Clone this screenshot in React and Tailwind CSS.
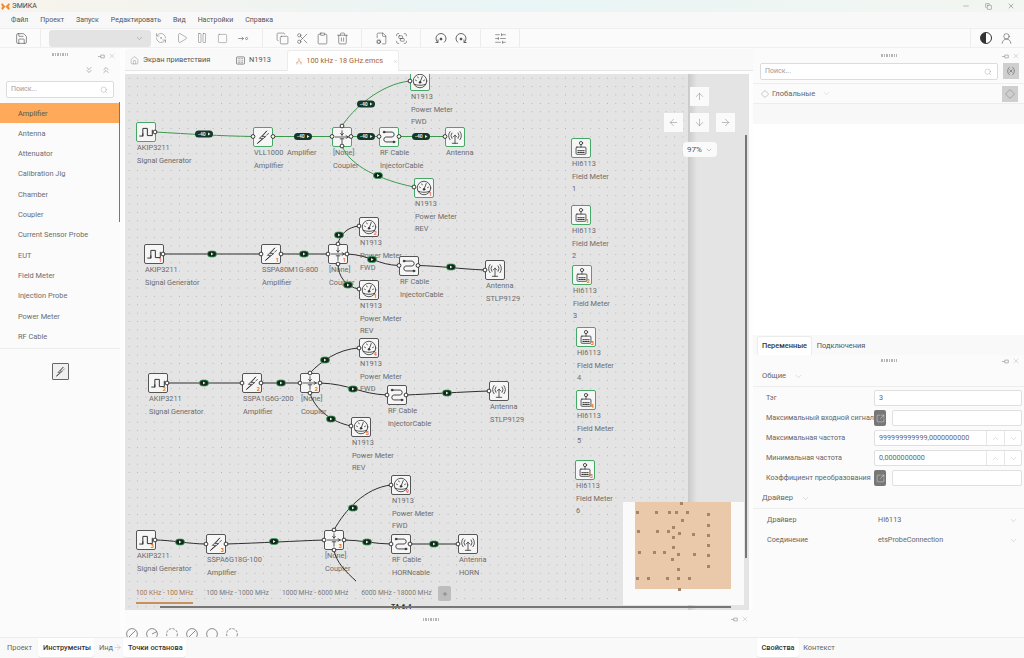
import {
  ArrowRight,
  ArrowDown,
  ArrowLeft,
  ArrowUp,
  ChevronDown,
  ChevronUp,
  ChevronsDown,
  ChevronsUp,
  Clipboard,
  Copy,
  Diamond,
  FileCog,
  Group,
  Home,
  Minus,
  Network,
  Pause,
  Play,
  Plus,
  RefreshCcwDot,
  Save,
  Scissors,
  Search,
  SlidersHorizontal,
  Square,
  SquareArrowOutUpRight,
  Trash2,
  UserRound,
  Variable,
  X,
} from "lucide-react";

// canvas origin on the page, nodes and wires below are in page coordinates
const OX = 125;
const OY = 74;

const NODES = [
  // row 1
  { t: "gen", x: 136, y: 122, on: 1, l: ["AKIP3211", "Signal Generator"] },
  { t: "amp", x: 253, y: 127, on: 1, l: ["VLL1000  Amplifier", "Amplifier"] },
  { t: "cpl", x: 332, y: 127, on: 1, l: ["[None]", "Coupler"] },
  { t: "cab", x: 379, y: 127, on: 1, l: ["RF Cable", "InjectorCable"] },
  { t: "ant", x: 445, y: 127, on: 1, l: ["Antenna"] },
  { t: "mtr", x: 410, y: 71, on: 1, l: ["N1913", "Power Meter", "FWD"] },
  { t: "mtr", x: 414, y: 178, on: 1, b: "1", l: ["N1913", "Power Meter", "REV"] },
  // row 2
  { t: "gen", x: 144, y: 244, b: "1", l: ["AKIP3211", "Signal Generator"] },
  { t: "amp", x: 261, y: 244, b: "1", l: ["SSPA80M1G-800", "Amplifier"] },
  { t: "cpl", x: 328, y: 244, b: "1", l: ["[None]", "Coupler"] },
  { t: "mtr", x: 359, y: 217, b: "2", l: ["N1913", "Power Meter", "FWD"] },
  { t: "mtr", x: 359, y: 280, b: "1", l: ["N1913", "Power Meter", "REV"] },
  { t: "cab", x: 399, y: 256, l: ["RF Cable", "InjectorCable"] },
  { t: "ant", x: 485, y: 260, l: ["Antenna", "STLP9129"] },
  // row 3
  { t: "gen", x: 148, y: 373, b: "2", l: ["AKIP3211", "Signal Generator"] },
  { t: "amp", x: 242, y: 373, b: "2", l: ["SSPA1G6G-200", "Amplifier"] },
  { t: "cpl", x: 300, y: 373, b: "2", l: ["[None]", "Coupler"] },
  { t: "mtr", x: 359, y: 338, b: "4", l: ["N1913", "Power Meter", "FWD"] },
  { t: "mtr", x: 351, y: 417, b: "5", l: ["N1913", "Power Meter", "REV"] },
  { t: "cab", x: 387, y: 385, l: ["RF Cable", "injectorCable"] },
  { t: "ant", x: 489, y: 381, l: ["Antenna", "STLP9129"] },
  // row 4
  { t: "gen", x: 136, y: 530, b: "3", l: ["AKIP3211", "Signal Generator"] },
  { t: "amp", x: 206, y: 534, b: "3", l: ["SSPA6G18G-100", "Amplifier"] },
  { t: "cpl", x: 324, y: 530, b: "3", l: ["[None]", "Coupler"] },
  { t: "mtr", x: 391, y: 475, b: "9", l: ["N1913", "Power Meter", "FWD"] },
  { t: "cab", x: 391, y: 534, l: ["RF Cable", "HORNcable"] },
  { t: "ant", x: 458, y: 534, l: ["Antenna", "HORN"] },
  // field meters
  { t: "fld", x: 571, y: 138, on: 1, l: ["HI6113", "Field Meter", "1"] },
  { t: "fld", x: 571, y: 205, on: 1, b: "1", l: ["HI6113", "Field Meter", "2"] },
  { t: "fld", x: 572, y: 265, on: 1, b: "2", l: ["HI6113", "Field Meter", "3"] },
  { t: "fld", x: 576, y: 327, on: 1, b: "3", l: ["HI6113", "Field Meter", "4"] },
  { t: "fld", x: 576, y: 390, on: 1, b: "4", l: ["HI6113", "Field Meter", "5"] },
  { t: "fld", x: 575, y: 460, on: 1, b: "5", l: ["HI6113", "Field Meter", "6"] },
];

// d = wire path, p = pill position, g = green wire with -40 label
const WIRES = [
  { d: "M155 132 C190 134 220 136 253 136.5", p: [204, 134], g: 1 },
  { d: "M273 136.5 H332", p: [303, 136.5], g: 1 },
  { d: "M351 136.5 H379", p: [366, 136.5], g: 1 },
  { d: "M399 136.5 H445", p: [421, 136.5], g: 1 },
  { d: "M342 126 C352 110 380 84 410 81", p: [366, 104], g: 1 },
  { d: "M342 146 C350 166 380 180 414 187", p: [378, 175.5], g: 1, s: 1 },

  { d: "M163 254 H261", p: [212, 254] },
  { d: "M281 254 H328", p: [304, 254] },
  { d: "M338 244 C340 234 348 227 359 226", p: [339, 235] },
  { d: "M338 264 C338 276 346 287 359 289", p: [348, 285] },
  { d: "M347 254 C370 255 378 265 399 265.5", p: [372, 259.5] },
  { d: "M418 265.5 C440 266 460 269 485 270", p: [451, 267] },

  { d: "M167 383 H242", p: [204, 383] },
  { d: "M261 383 H300", p: [281, 383] },
  { d: "M310 373 C320 362 338 349 359 348", p: [325, 360] },
  { d: "M310 393 C315 410 332 422 351 426", p: [331, 419] },
  { d: "M320 383 C350 384 360 394 387 395", p: [353, 389] },
  { d: "M406 395 C430 394 460 392 489 391", p: [447, 393] },

  { d: "M155 540 C170 540 190 544 206 544", p: [180, 542] },
  { d: "M226 544 C260 543 295 541 324 540", p: [274, 541.5] },
  { d: "M334 530 C345 510 365 488 391 485", p: [353, 508] },
  { d: "M344 540 C360 540 375 544 391 544", p: [367, 542] },
  { d: "M410 544 H458", p: [434, 544] },
  { d: "M334 550 C336 562 346 572 356 581" },
];

const PORTS = [
  [155, 132], [253, 136.5], [273, 136.5], [332, 136.5], [351, 136.5], [342, 126], [342, 146],
  [379, 136.5], [399, 136.5], [445, 136.5], [410, 81], [414, 187],
  [163, 254], [261, 254], [281, 254], [328, 254], [347, 254], [338, 244], [338, 264],
  [359, 226], [359, 289], [399, 265.5], [418, 265.5], [485, 270],
  [167, 383], [242, 383], [261, 383], [300, 383], [320, 383], [310, 373], [310, 393],
  [359, 348], [351, 426], [387, 395], [406, 395], [489, 391],
  [155, 540], [206, 544], [226, 544], [324, 540], [344, 540], [334, 530], [334, 550],
  [391, 485], [391, 544], [410, 544], [458, 544],
];

const MINI_DOTS = [
  [365, 160], [232, 185], [289, 187], [327, 187], [350, 187], [382, 186], [444, 192], [367, 211],
  [444, 225], [340, 230], [235, 244], [293, 244], [325, 244], [359, 249], [401, 252], [444, 254],
  [340, 261], [446, 284], [340, 290], [237, 307], [283, 307], [312, 307], [354, 313], [403, 311],
  [446, 315], [337, 328], [446, 349], [355, 357], [232, 384], [266, 385], [323, 384], [355, 385],
  [388, 385], [358, 416],
];

const TOOLS = [
  "Amplifier",
  "Antenna",
  "Attenuator",
  "Calibration Jig",
  "Chamber",
  "Coupler",
  "Current Sensor Probe",
  "EUT",
  "Field Meter",
  "Injection Probe",
  "Power Meter",
  "RF Cable",
];

const MENU = ["Файл", "Проект", "Запуск", "Редактировать", "Вид", "Настройки", "Справка"];

function NodeIcon({ type }) {
  const common = { fill: "none", stroke: "#333", strokeWidth: 0.9, strokeLinecap: "round", strokeLinejoin: "round" };
  return (
    <svg viewBox="0 0 20 20" className="w-full h-full" {...common}>
      {type === "gen" && <path d="M3 14.5h3.5V12 M6.5 14.5V6h5v8h5.5V8" strokeWidth="1.1" />}
      {type === "amp" && <path d="M14 3.5 6 11.5h3.5L4 17l9-7.5H9.5z M16 6l-2 2 M6 15l-2 2" />}
      {type === "cpl" && (
        <>
          <path d="M2.5 10h15 M14.5 8.5 17 10l-2.5 1.5" />
          <path d="M10 3v5 M8.5 6 10 8l1.500-2 M10 12v5 M8 12h4" />
        </>
      )}
      {type === "cab" && (
        <>
          <path d="M5.500 4.500h8a2.800 2.800 0 0 1 0 5.500h-7a2.800 2.800 0 0 0 0 5.500h8" strokeWidth="1" />
          <circle cx="4.500" cy="4.500" r="1" fill="#333" />
          <circle cx="15.500" cy="15.500" r="1" fill="#333" />
        </>
      )}
      {type === "ant" && (
        <>
          <path d="M10 8v9 M7 17h6 M8 10l2-2 2 2" />
          <path d="M6.500 5.500a5 5 0 0 0 0 6 M4.500 4a7.500 7.500 0 0 0 0 9 M13.500 5.500a5 5 0 0 1 0 6 M15.500 4a7.500 7.500 0 0 1 0 9" />
        </>
      )}
      {type === "mtr" && (
        <>
          <circle cx="10" cy="10" r="7.500" />
          <path d="M3.500 13.500c4 1.800 9 1.800 13 0 M10 11.500 12.500 5 M5 9l1 .5 M7.500 5.500l.5 1 M15 9l-1 .5" />
          <circle cx="10" cy="11.500" r="1" fill="#333" />
        </>
      )}
      {type === "fld" && (
        <>
          <circle cx="10" cy="4.500" r="1.800" />
          <path d="M10 6.300V9" />
          <rect x="4.500" y="9" width="11" height="8" rx="1" />
          <path d="M6.500 13h7 M6.500 15h7" strokeDasharray="1 1" strokeWidth="1.100" />
        </>
      )}
    </svg>
  );
}

function DiagramNode({ node }) {
  return (
    <>
      <div
        className={`absolute w-5 h-5 bg-[#f6f6f6] rounded-[2px] border-[1.2px] ${node.on ? "border-[#45a866]" : "border-[#555]"}`}
        style={{ left: node.x - OX, top: node.y - OY }}
      >
        <NodeIcon type={node.t} />
        {node.b && (
          <span className="absolute right-[1px] bottom-0 text-[5.5px] leading-[6px] font-bold text-[#f0672a]">{node.b}</span>
        )}
      </div>
      <div
        className="absolute whitespace-pre text-[7.4px] leading-[12.6px] text-[#6c6c6c]"
        style={{ left: node.x - OX + 1, top: node.y - OY + 20 }}
      >
        {node.l.map((line) => (
          <div key={line}>{line}</div>
        ))}
      </div>
    </>
  );
}

function Wires() {
  return (
    <svg viewBox={`${OX} ${OY} 624 536`} className="absolute left-0 top-0 w-[624px] h-[536px]">
      {WIRES.map((w) => (
        <path key={w.d} d={w.d} fill="none" stroke={w.g ? "#3c9a4c" : "#2e2e2e"} strokeWidth="1" />
      ))}
      {WIRES.filter((w) => w.p).map((w) =>
        w.g && !w.s ? (
          <g key={w.d}>
            <rect x={w.p[0] - 9} y={w.p[1] - 3.5} width="18" height="7" rx="3.5" fill="#12392a" />
            <text x={w.p[0] - 6} y={w.p[1] + 1.800} fontSize="5" fontWeight="700" fill="#e8e8e8">
              -40
            </text>
            <path d={`M${w.p[0] + 4} ${w.p[1] - 1.500}l2.500 1.500-2.500 1.500z`} fill="#e8e8e8" />
          </g>
        ) : (
          <g key={w.d}>
            <rect x={w.p[0] - 4.5} y={w.p[1] - 3} width="9" height="6" rx="3" fill="#14251c" stroke="#37a35a" strokeWidth="0.8" />
            <path d={`M${w.p[0] - 1} ${w.p[1] - 1.500}l2.500 1.500-2.500 1.500z`} fill="#e8e8e8" />
          </g>
        ),
      )}
      {PORTS.map(([x, y]) => (
        <circle key={`${x}-${y}`} cx={x} cy={y} r="1.900" fill="#fff" stroke="#222" strokeWidth="0.9" />
      ))}
    </svg>
  );
}

function NavButton({ children }) {
  return <div className="w-[19px] h-[19px] bg-[#fafafa] flex items-center justify-center text-[#777]">{children}</div>;
}

function ToolBtn({ children }) {
  return <div className="w-5 h-5 shrink-0 flex items-center justify-center text-[#6e6e6e]">{children}</div>;
}

function Sep() {
  return <div className="w-px h-[18px] mx-[9px] shrink-0 bg-[#ececec]" />;
}

function Grip() {
  return <div className="w-[16px] h-[3px] bg-[repeating-linear-gradient(90deg,#b5b5b5_0_1.500px,transparent_1.500px_2.500px)]" />;
}

// little pin + close pair on the dock panels
function PinClose() {
  return (
    <div className="flex items-center gap-[3px] text-[#9a9a9a]">
      <svg viewBox="0 0 10 10" className="w-[7px] h-[7px]" fill="none" stroke="currentColor" strokeWidth="1">
        <path d="M0 5h4 M4 3h5v4H4z" />
      </svg>
      <X size={8} strokeWidth={1} />
    </div>
  );
}

function SearchBox({ className }) {
  return (
    <div className={`h-[17px] bg-white border border-[#dcdcdc] rounded-[2px] flex items-center justify-between pl-1 pr-[5px] ${className}`}>
      <span className="text-[7px] text-[#9a9a9a]">Поиск...</span>
      <Search size={8} strokeWidth={1} className="text-[#8a8a8a]" />
    </div>
  );
}

function LeftPanel() {
  return (
    <div className="relative w-[120px] shrink-0 flex flex-col bg-[#fbfbfb]">
      <div className="h-[11px] mt-[1px] relative flex items-center justify-center">
        <Grip />
        <div className="absolute right-[4px] top-[3px]">
          <PinClose />
        </div>
      </div>
      <div className="h-[15px] flex items-center justify-end gap-[7px] pr-[9px] pt-1 text-[#444]">
        <ChevronsDown size={10} strokeWidth={1} />
        <ChevronsUp size={10} strokeWidth={1} />
      </div>
      <SearchBox className="mx-[6px] mt-[6px] w-[108px]" />
      <div className="mt-[5px] flex flex-col border-b border-[#ededed] pb-[1px]">
        {TOOLS.map((tool, i) => (
          <div
            key={tool}
            className={`h-[20.300px] pl-[18px] flex items-center text-[7.4px] ${i === 0 ? "bg-[#ffa95a] text-[#555]" : "text-[#6c6c6c]"}`}
          >
            {tool}
          </div>
        ))}
      </div>
      <div className="mt-[14px] ml-[52px] w-[17px] h-[17px] border border-[#666] bg-[#f0f0f0] rounded-[1px] p-[1px]">
        <NodeIcon type="amp" />
      </div>
      <div className="absolute right-0 top-[54px] w-[1.500px] h-[120px] bg-[#777]" />
    </div>
  );
}

function EditorTabs() {
  return (
    <div className="h-[22px] mt-[1px] shrink-0 flex items-end bg-[#f9f9f9] border-b border-[#e6e6e6] text-[7.4px] text-[#555]">
      <div className="flex items-center h-[20px] w-[106px] pl-[5px] gap-[4px]">
        <Home size={9} strokeWidth={1} className="text-[#777]" />
        <span>Экран приветствия</span>
      </div>
      <div className="flex items-center h-[20px] w-[56px] pl-[5px] gap-[4px]">
        <svg viewBox="0 0 10 10" className="w-[9px] h-[9px]" fill="none" stroke="#666" strokeWidth="0.8">
          <rect x="0.5" y="1" width="9" height="8" rx="1" />
          <path d="M2 3h6 M2 5.500h6 M2 7.500h6" strokeDasharray="1 0.6" />
        </svg>
        <span>N1913</span>
      </div>
      <div className="flex items-center h-[21px] w-[112px] -mb-px pl-[8px] gap-[4px] bg-white rounded-t-[3px] border border-b-0 border-[#ececec] text-[#a9642c] whitespace-nowrap">
        <Network size={9} strokeWidth={1} className="text-[#c9783a]" />
        <span>100 kHz - 18 GHz.emcs</span>
        <X size={7} strokeWidth={1} className="ml-[6px] text-[#888]" />
      </div>
    </div>
  );
}

function Canvas() {
  return (
    <div className="relative w-[624px] h-[536px] mt-[3px] shrink-0 overflow-hidden bg-[#e4e4e4]">
      {/* dotted drawing area */}
      <div className="absolute left-0 top-0 w-[563px] h-full overflow-hidden bg-[#e4e4e4] bg-[radial-gradient(circle,#b0b0b0_0.5px,transparent_0.8px)] bg-[size:8.400px_8.400px]">
        {NODES.map((n) => (
          <DiagramNode key={`${n.x}-${n.y}`} node={n} />
        ))}
        <Wires />
        <div className="absolute left-[266px] top-[530px] text-[7px] font-bold leading-none text-[#333]">TA 6.4</div>
      </div>
      <div className="absolute left-[563px] top-0 w-[9px] h-full bg-gradient-to-r from-[#c9c9c9] to-[#e4e4e4]" />

      {/* scroll bars */}
      <div className="absolute left-[620px] top-[61px] w-[1.500px] h-[423px] bg-[#777]" />
      <div className="absolute left-[35px] top-[532px] w-[571px] h-[1.500px] bg-[#777]" />

      {/* arrows */}
      <div className="absolute left-[539px] top-[13px] grid grid-cols-[19px_19px_19px] gap-x-[7px] gap-y-[7px]">
        <div />
        <NavButton>
          <ArrowUp size={11} strokeWidth={1} />
        </NavButton>
        <div />
        <NavButton>
          <ArrowLeft size={11} strokeWidth={1} />
        </NavButton>
        <NavButton>
          <ArrowDown size={11} strokeWidth={1} />
        </NavButton>
        <NavButton>
          <ArrowRight size={11} strokeWidth={1} />
        </NavButton>
      </div>
      <div className="absolute left-[558px] top-[68px] w-[34px] h-[15px] rounded-[4px] bg-[#fafafa] flex items-center justify-center gap-[3px] text-[8px] text-[#555]">
        97%
        <ChevronDown size={8} strokeWidth={1} />
      </div>

      {/* band tabs */}
      <div className="absolute left-[11px] top-[512px] flex items-center gap-[13px] text-[6.7px] text-[#7a7a7a]">
        <div className="relative text-[#a9784f]">
          100 KHz - 100 MHz
          <div className="absolute left-0 right-0 top-[14px] h-[1.500px] bg-[#c98f5c]" />
        </div>
        <span>100 MHz - 1000 MHz</span>
        <span>1000 MHz - 6000 MHz</span>
        <span>6000 MHz - 18000 MHz</span>
        <div className="-ml-[6px] w-[13px] h-[15px] bg-[#bdbdbd] rounded-[2px] flex items-center justify-center text-[#444]">
          <Plus size={6} strokeWidth={1.500} />
        </div>
      </div>

      {/* minimap */}
      <div className="absolute left-[498px] top-[428px] w-[121px] h-[103px] bg-[#fafafa]">
        <div className="absolute left-[12px] top-0 w-[96px] h-[87px] bg-[#e9c9aa]" />
        {MINI_DOTS.map(([x, y]) => (
          <div
            key={`${x}-${y}`}
            className="absolute w-[3px] h-[3px] bg-[#a5846a]"
            style={{ left: (x - 189) / 3 - 1.5, top: (y - 155) / 3 - 1.5 }}
          />
        ))}
      </div>
    </div>
  );
}

function CenterBottom() {
  return (
    <div className="relative flex-1 overflow-hidden bg-[#fbfbfb]">
      <div className="absolute left-[298px] top-[8px]">
        <Grip />
      </div>
      <div className="absolute right-[4px] top-[5px]">
        <PinClose />
      </div>
      <div className="absolute left-[1px] top-[18px] flex gap-2">
        {[0, 1, 2, 3, 4, 5].map((i) => (
          <svg key={i} viewBox="0 0 10 10" className="w-3 h-3" fill="none" stroke="#777" strokeWidth="0.7">
            <circle cx="5" cy="5" r="4.500" strokeDasharray={i === 2 || i === 5 ? "2 1" : undefined} />
            {(i === 0 || i === 3) && <path d="M2 8 8 2" />}
            {i === 1 && <path d="M5 5 9 3" />}
          </svg>
        ))}
      </div>
    </div>
  );
}

function BottomTabs() {
  return (
    <div className="h-[21px] shrink-0 flex items-start bg-[#f9f9f9] border-t border-[#ececec] text-[7.4px] text-[#666]">
      <div className="w-[38px] h-[20px] pl-[7px] flex items-center">Проект</div>
      <div className="w-[56px] h-[19px] pl-[5px] flex items-center bg-white rounded-b-[3px] shadow-[0_1px_1px_#e5e5e5] font-medium text-[#333]">
        Инструменты
      </div>
      <div className="w-[29px] h-[20px] pl-[5px] flex items-center">
        <span>Инд</span>
        <ArrowRight size={9} strokeWidth={0.8} className="shrink-0 -mt-[2px] text-[#888]" />
      </div>
      <div className="w-[63px] h-[19px] pl-[5px] flex items-center bg-white rounded-b-[3px] shadow-[0_1px_1px_#e5e5e5] font-medium text-[#333]">
        Точки останова
      </div>
    </div>
  );
}

function PropRow({ label, children }) {
  return (
    <div className="h-5 flex items-center pl-[13px] pr-[2px] text-[7.2px] text-[#666]">
      <span className="w-[108px] shrink-0 whitespace-nowrap">{label}</span>
      {children}
    </div>
  );
}

function TextInput({ value, className = "", spin }) {
  return (
    <div className={`h-4 flex items-center bg-white border border-[#e0e0e0] rounded-[2px] text-[7.2px] text-[#666] ${className}`}>
      <span className="flex-1 pl-1">{value}</span>
      {spin && (
        <>
          <div className="w-[18px] h-full border-l border-[#e6e6e6] flex items-center justify-center text-[#aaa]">
            <ChevronUp size={9} strokeWidth={1} />
          </div>
          <div className="w-[17px] h-full border-l border-[#e6e6e6] flex items-center justify-center text-[#aaa]">
            <ChevronDown size={9} strokeWidth={1} />
          </div>
        </>
      )}
    </div>
  );
}

function LinkInput() {
  return (
    <div className="flex-1 flex items-center gap-[6px]">
      <div className="w-3 h-4 rounded-[2px] bg-[#777] flex items-center justify-center text-white">
        <SquareArrowOutUpRight size={9} strokeWidth={1} />
      </div>
      <TextInput value="" className="flex-1" />
    </div>
  );
}

function SectionHead({ children }) {
  return (
    <div className="h-[21px] pl-[9px] flex items-center gap-[8px] border-b border-[#ededed] text-[7.6px] text-[#666]">
      {children}
      <ChevronDown size={9} strokeWidth={1} className="text-[#aaa]" />
    </div>
  );
}

function SelectRow({ label, value }) {
  return (
    <div className="h-5 flex items-center pl-[14px] pr-[6px] text-[7.2px] text-[#666]">
      <span className="w-[111px] shrink-0">{label}</span>
      <span className="flex-1">{value}</span>
      <ChevronDown size={9} strokeWidth={1} className="text-[#aaa]" />
    </div>
  );
}

function RightPanel() {
  return (
    <div className="w-[271px] shrink-0 flex flex-col bg-white">
      {/* globals */}
      <div className="h-[287px] shrink-0 flex flex-col">
        <div className="h-[15px] relative flex items-center justify-center bg-[#fbfbfb]">
          <Grip />
          <div className="absolute right-[4px] top-[4px]">
            <PinClose />
          </div>
        </div>
        <div className="h-[21px] flex items-start gap-[5px] pl-[7px] bg-[#fbfbfb] border-b border-[#ededed]">
          <SearchBox className="w-[238px]" />
          <div className="w-4 h-4 bg-[#cfcfcf] flex items-center justify-center text-[#444]">
            <Variable size={10} strokeWidth={1.200} />
          </div>
        </div>
        <div className="h-[20px] flex items-center pl-[8px] pr-[6px] bg-[#fbfbfb] border-b border-[#ededed] text-[7.6px] text-[#666]">
          <Diamond size={8} strokeWidth={1} className="mr-[3px]" />
          Глобальные
          <ChevronDown size={9} strokeWidth={1} className="ml-[7px] text-[#bbb]" />
          <div className="ml-auto w-4 h-4 bg-[#cfcfcf] flex items-center justify-center text-[#666]">
            <Diamond size={10} strokeWidth={1} />
          </div>
        </div>
        <div className="h-[20px] bg-[#f8f8f8]" />
      </div>

      {/* properties */}
      <div className="h-5 shrink-0 flex items-end pl-[4px] bg-[#f9f9f9] text-[7.4px]">
        <div className="w-[55px] h-[19px] flex items-center justify-center bg-white rounded-t-[3px] border border-b-0 border-[#ececec] font-medium text-[#333]">
          Переменные
        </div>
        <div className="w-[58px] h-[19px] flex items-center justify-center text-[#555]">Подключения</div>
      </div>
      <div className="flex-1 flex flex-col bg-[#fbfbfb]">
        <div className="h-[11px] relative flex items-center justify-center">
          <Grip />
          <div className="absolute right-[4px] top-[2px]">
            <PinClose />
          </div>
        </div>
        <SectionHead>Общие</SectionHead>
        <div className="pt-[1px]">
          <PropRow label="Тэг">
            <TextInput value="3" className="flex-1" />
          </PropRow>
          <PropRow label="Максимальный входной сигнал">
            <LinkInput />
          </PropRow>
          <PropRow label="Максимальная частота">
            <TextInput value="999999999999,0000000000" className="flex-1" spin />
          </PropRow>
          <PropRow label="Минимальная частота">
            <TextInput value="0,0000000000" className="flex-1" spin />
          </PropRow>
          <PropRow label="Коэффициент преобразования">
            <LinkInput />
          </PropRow>
        </div>
        <SectionHead>Драйвер</SectionHead>
        <div className="pt-[1px]">
          <SelectRow label="Драйвер" value="HI6113" />
          <SelectRow label="Соединение" value="etsProbeConnection" />
        </div>
      </div>
      <div className="h-[21px] shrink-0 flex items-start pl-[4px] bg-[#f9f9f9] border-t border-[#ececec] text-[7.4px] text-[#666]">
        <div className="w-[42px] h-[19px] flex items-center justify-center bg-white rounded-b-[3px] shadow-[0_1px_1px_#e5e5e5] font-medium text-[#333]">
          Свойства
        </div>
        <div className="w-[40px] h-[20px] flex items-center justify-center">Контекст</div>
      </div>
    </div>
  );
}

export default function App() {
  return (
    <div className="w-[1024px] h-[658px] overflow-hidden flex flex-col bg-white font-['Roboto','Noto_Sans',sans-serif]">
      {/* title bar */}
      <div className="h-3 shrink-0 flex items-center pl-[1px] bg-gradient-to-r from-[#f8f3ec] via-[#e9f5f6] to-[#f3f6f1] text-[7px] text-[#444]">
        <svg viewBox="0 0 10 8" className="w-[9px] h-[7px] mr-[2px]" fill="#f08c2e">
          <path d="M5 4 1 0 0 2l1.500 2L0 6l1.500 2zM5 4l4-4 1 2-1.500 2L10 6 8.500 8z" />
        </svg>
        ЭМИКА
        <div className="ml-auto flex items-center gap-[15px] pr-[9px] text-[#444]">
          <Minus size={8} strokeWidth={1} />
          <Copy size={7} strokeWidth={1.200} />
          <X size={8} strokeWidth={1.200} />
        </div>
      </div>

      {/* menu */}
      <div className="h-4 shrink-0 flex items-center pl-[11px] gap-3 bg-[#f8f8f8] text-[7px] text-[#555]">
        {MENU.map((m) => (
          <span key={m}>{m}</span>
        ))}
      </div>

      {/* toolbar */}
      <div className="h-5 shrink-0 flex items-center pl-[11px] pr-[8px] bg-[#fbfbfb] border-y border-[#efefef]">
        <ToolBtn>
          <Save size={13} strokeWidth={1} className="text-[#333]" />
        </ToolBtn>
        <Sep />
        <div className="w-[102px] h-[17px] shrink-0 -ml-px rounded-[3px] bg-[#e3e3e3] flex items-center justify-end pr-[7px] text-[#666]">
          <ChevronDown size={9} strokeWidth={1} />
        </div>
        <ToolBtn>
          <RefreshCcwDot size={12} strokeWidth={1} />
        </ToolBtn>
        <div className="w-px shrink-0" />
        <ToolBtn>
          <Play size={12} strokeWidth={1} />
        </ToolBtn>
        <ToolBtn>
          <Pause size={12} strokeWidth={1} />
        </ToolBtn>
        <ToolBtn>
          <Square size={11} strokeWidth={1} />
        </ToolBtn>
        <div className="w-px shrink-0" />
        <ToolBtn>
          <svg viewBox="0 0 12 8" className="w-[11px] h-[7px]" fill="none" stroke="currentColor" strokeWidth="0.8">
            <path d="M0 4h6 M4 2l2 2-2 2" />
            <circle cx="9.500" cy="4" r="1.200" />
          </svg>
        </ToolBtn>
        <Sep />
        <ToolBtn>
          <Copy size={13} strokeWidth={1} className="text-[#555]" />
        </ToolBtn>
        <ToolBtn>
          <Scissors size={13} strokeWidth={1} className="text-[#444]" />
        </ToolBtn>
        <ToolBtn>
          <Clipboard size={13} strokeWidth={1} className="text-[#444]" />
        </ToolBtn>
        <ToolBtn>
          <Trash2 size={13} strokeWidth={1} className="text-[#444]" />
        </ToolBtn>
        <Sep />
        <ToolBtn>
          <FileCog size={13} strokeWidth={1} className="text-[#444]" />
        </ToolBtn>
        <ToolBtn>
          <Group size={13} strokeWidth={1} className="text-[#444]" />
        </ToolBtn>
        <Sep />
        <div className="w-px shrink-0" />
        {[0, 1].map((i) => (
          <ToolBtn key={i}>
            <svg
              viewBox="0 0 12 12"
              className={`w-3 h-3 text-[#444] ${i === 1 ? "-scale-x-100" : ""}`}
              fill="none"
              stroke="currentColor"
              strokeWidth="0.8"
            >
              <path d="M3 10.500A5 5 0 1 1 9 10.500 M3 7.500v3h-2.500" />
              <circle cx="6" cy="7" r="1" fill="currentColor" />
            </svg>
          </ToolBtn>
        ))}
        <Sep />
        <ToolBtn>
          <SlidersHorizontal size={13} strokeWidth={1} className="text-[#444]" />
        </ToolBtn>
        <Sep />
        <div className="ml-auto w-px h-[18px] bg-[#ececec]" />
        <div className="ml-[5px] w-5 h-5 flex items-center justify-center">
          <div className="w-3 h-3 rounded-full border border-[#333] bg-[linear-gradient(90deg,#333_50%,#fff_50%)]" />
        </div>
        <div className="w-5 h-5 flex items-center justify-center text-[#444]">
          <UserRound size={13} strokeWidth={1} />
        </div>
      </div>

      {/* main area */}
      <div className="flex-1 min-h-0 flex">
        <div className="w-[753px] shrink-0 flex flex-col">
          <div className="flex-1 min-h-0 flex">
            <LeftPanel />
            <div className="w-[633px] flex flex-col pl-[5px] bg-[#fdfdfd]">
              <EditorTabs />
              <Canvas />
              <CenterBottom />
            </div>
          </div>
          <BottomTabs />
        </div>
        <RightPanel />
      </div>
    </div>
  );
}
